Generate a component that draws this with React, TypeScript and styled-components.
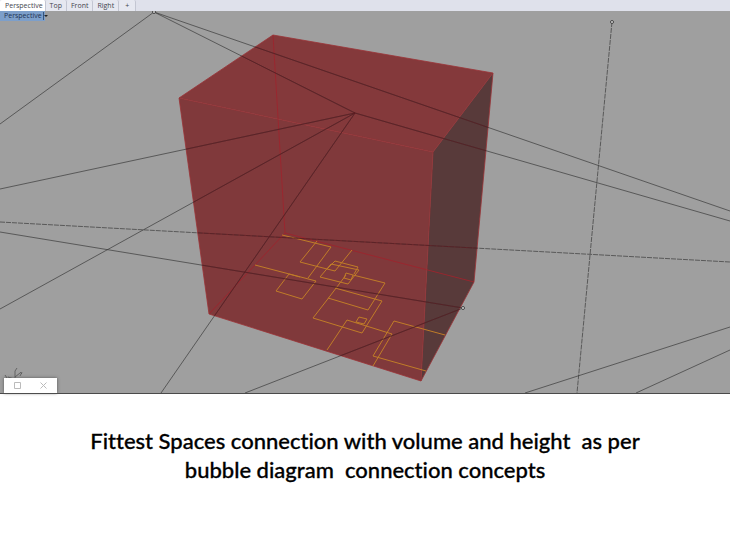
import React from "react";
import styled, { createGlobalStyle } from "styled-components";

const GlobalStyle = createGlobalStyle`
  body { margin: 0; background: #fff; }
  * { box-sizing: border-box; }
`;

const Page = styled.main`
  display: flex;
  flex-direction: column;
`;

const Tabs = styled.nav`
  display: flex;
  height: 11px;
  background: #dfe1eb;
`;

const Tab = styled.button<{ $active?: boolean }>`
  height: 11px;
  padding: 0 4px;
  border: 0;
  border-right: 1px solid #c3c6d2;
  border-radius: 2px 2px 0 0;
  background: ${(p) => (p.$active ? "#ffffff" : "#e6e8f0")};
  color: #44464d;
  font: 7px/11px "Open Sans", sans-serif;
  &:first-child { padding: 0 2px 0 5px; }
  &:last-child { padding: 0 6px; }
`;

const Viewport = styled.section`
  position: relative;
  background: #9f9f9f;
  border-bottom: 1px solid #4a4a4a;
`;

const Scene = styled.svg`
  display: block;
  width: 100%;
  height: auto;
`;

const ViewLabel = styled.button`
  position: absolute;
  top: 0;
  left: 0;
  display: flex;
  align-items: center;
  height: 10px;
  padding: 0 0 0 4px;
  border: 0;
  background: linear-gradient(#7d9fca, #7d9fca) no-repeat 0 0 / calc(100% - 3px) 100%;
  color: #1d3352;
  font: 7px/10px "Open Sans", sans-serif;
`;

const LabelArrow = styled.svg`
  margin-left: 1px;
`;

const MiniWindow = styled.div`
  position: absolute;
  left: 4px;
  bottom: 0;
  display: flex;
  justify-content: space-around;
  width: 53px;
  height: 15px;
  background: #fff;
  box-shadow: 0 0 3px #555;
`;

const WindowButton = styled.button`
  display: grid;
  place-items: center;
  width: 20px;
  padding: 0;
  border: 0;
  background: transparent;
`;

const Caption = styled.h1`
  margin: 0;
  padding: 32px 16px;
  color: #000;
  font: 500 22px/29px Lato, sans-serif;
  font-variant-ligatures: none;
  -webkit-text-stroke: 0.3px #000;
  text-align: center;
  white-space: pre-wrap;
`;

const guides = [
  "M0 124L154 12L355 113L730 221",
  "M154 12L730 211",
  "M0 189L355 113L0 309",
  "M355 113L161 393",
  "M0 232L463 308L245 393",
  "M525 393L730 327",
  "M636 393L730 350",
];

const plan = [
  "M282 235L331 247L308 278",
  "M317 241L300 262L327 269",
  "M255 265L316 281L302 299L276 291L289 274L300 277",
  "M352 250L335 271L327 269L335 261L358 267L354 274",
  "M331 264L359 270L348 284L320 277Z",
  "M346 273L353 275L351 280L344 278Z",
  "M346 275L327 300L313 318L362 333L382 301L335 288",
  "M328 298L368 310L385 283L353 275",
  "M359 317L367 319L364 324L356 322Z",
  "M327 350L347 320L392 334L373 366",
  "M445 335L394 321L373 356L426 371",
];

export default function App() {
  return (
    <Page>
      <GlobalStyle />
      <Tabs aria-label="Viewports">
        <Tab $active>Perspective</Tab>
        <Tab>Top</Tab>
        <Tab>Front</Tab>
        <Tab>Right</Tab>
        <Tab aria-label="Add viewport">+</Tab>
      </Tabs>
      <Viewport>
        <Scene viewBox="0 11 730 382" fill="none" role="img" aria-label="Volume in perspective">
          <defs>
            <clipPath id="volume">
              <path d="M179 98L273 35L493 73L474 282L421 381L209 314Z" />
            </clipPath>
          </defs>
          <path d="M179 98L273 35L493 73L433 152Z" fill="#84393b" />
          <path d="M179 98L433 152L421 381L209 314Z" fill="#80393b" />
          <path d="M433 152L493 73L474 282L421 381Z" fill="#583a3a" />
          <path d="M273 35L285 233L474 282M285 233L209 314" stroke="#9c252d" strokeOpacity=".9" />
          <path d="M179 98L273 35L493 73L433 152ZM179 98L209 314L421 381L433 152M493 73L474 282L421 381" stroke="#9b3337" strokeOpacity=".8" />
          <path d={plan.join("")} stroke="#c07c28" />
          <g stroke="#333" strokeOpacity=".65">
            <path d={guides.join("")} />
            <path d="M0 222L730 262M612 22L577 393" strokeDasharray="5 1" />
          </g>
          <g stroke="#6b1219" strokeOpacity=".5" clipPath="url(#volume)">
            <path d={guides.join("")} />
            <path d="M0 222L730 262" />
          </g>
          <g stroke="#444" fill="#ddd">
            <circle cx="154" cy="12" r="1.5" />
            <circle cx="612" cy="22" r="1.5" />
            <circle cx="463" cy="308" r="1.5" />
          </g>
          <path d="M15 378V371L17 368M15 377L20 373M14 379L8 377M20 372L22 374M22 372L20 376M5 375L7 378" stroke="#555" strokeOpacity=".8" />
        </Scene>
        <ViewLabel>
          Perspective
          <LabelArrow width="5" height="10" aria-hidden="true">
            <path d="M0 1h1v8h-1z" fill="#35547c" />
            <path d="M1 4h4l-2 2z" fill="#222" />
          </LabelArrow>
        </ViewLabel>
        <MiniWindow>
          <WindowButton aria-label="Maximize">
            <svg width="7" height="7" fill="none" stroke="#bbb"><path d="M.5 .5h6v6h-6z" /></svg>
          </WindowButton>
          <WindowButton aria-label="Close">
            <svg width="7" height="7" stroke="#bbb"><path d="M.5 .5l6 6M6.5 .5l-6 6" /></svg>
          </WindowButton>
        </MiniWindow>
      </Viewport>
      <Caption>{"Fittest Spaces connection with volume and height  as per\nbubble diagram  connection concepts"}</Caption>
    </Page>
  );
}
